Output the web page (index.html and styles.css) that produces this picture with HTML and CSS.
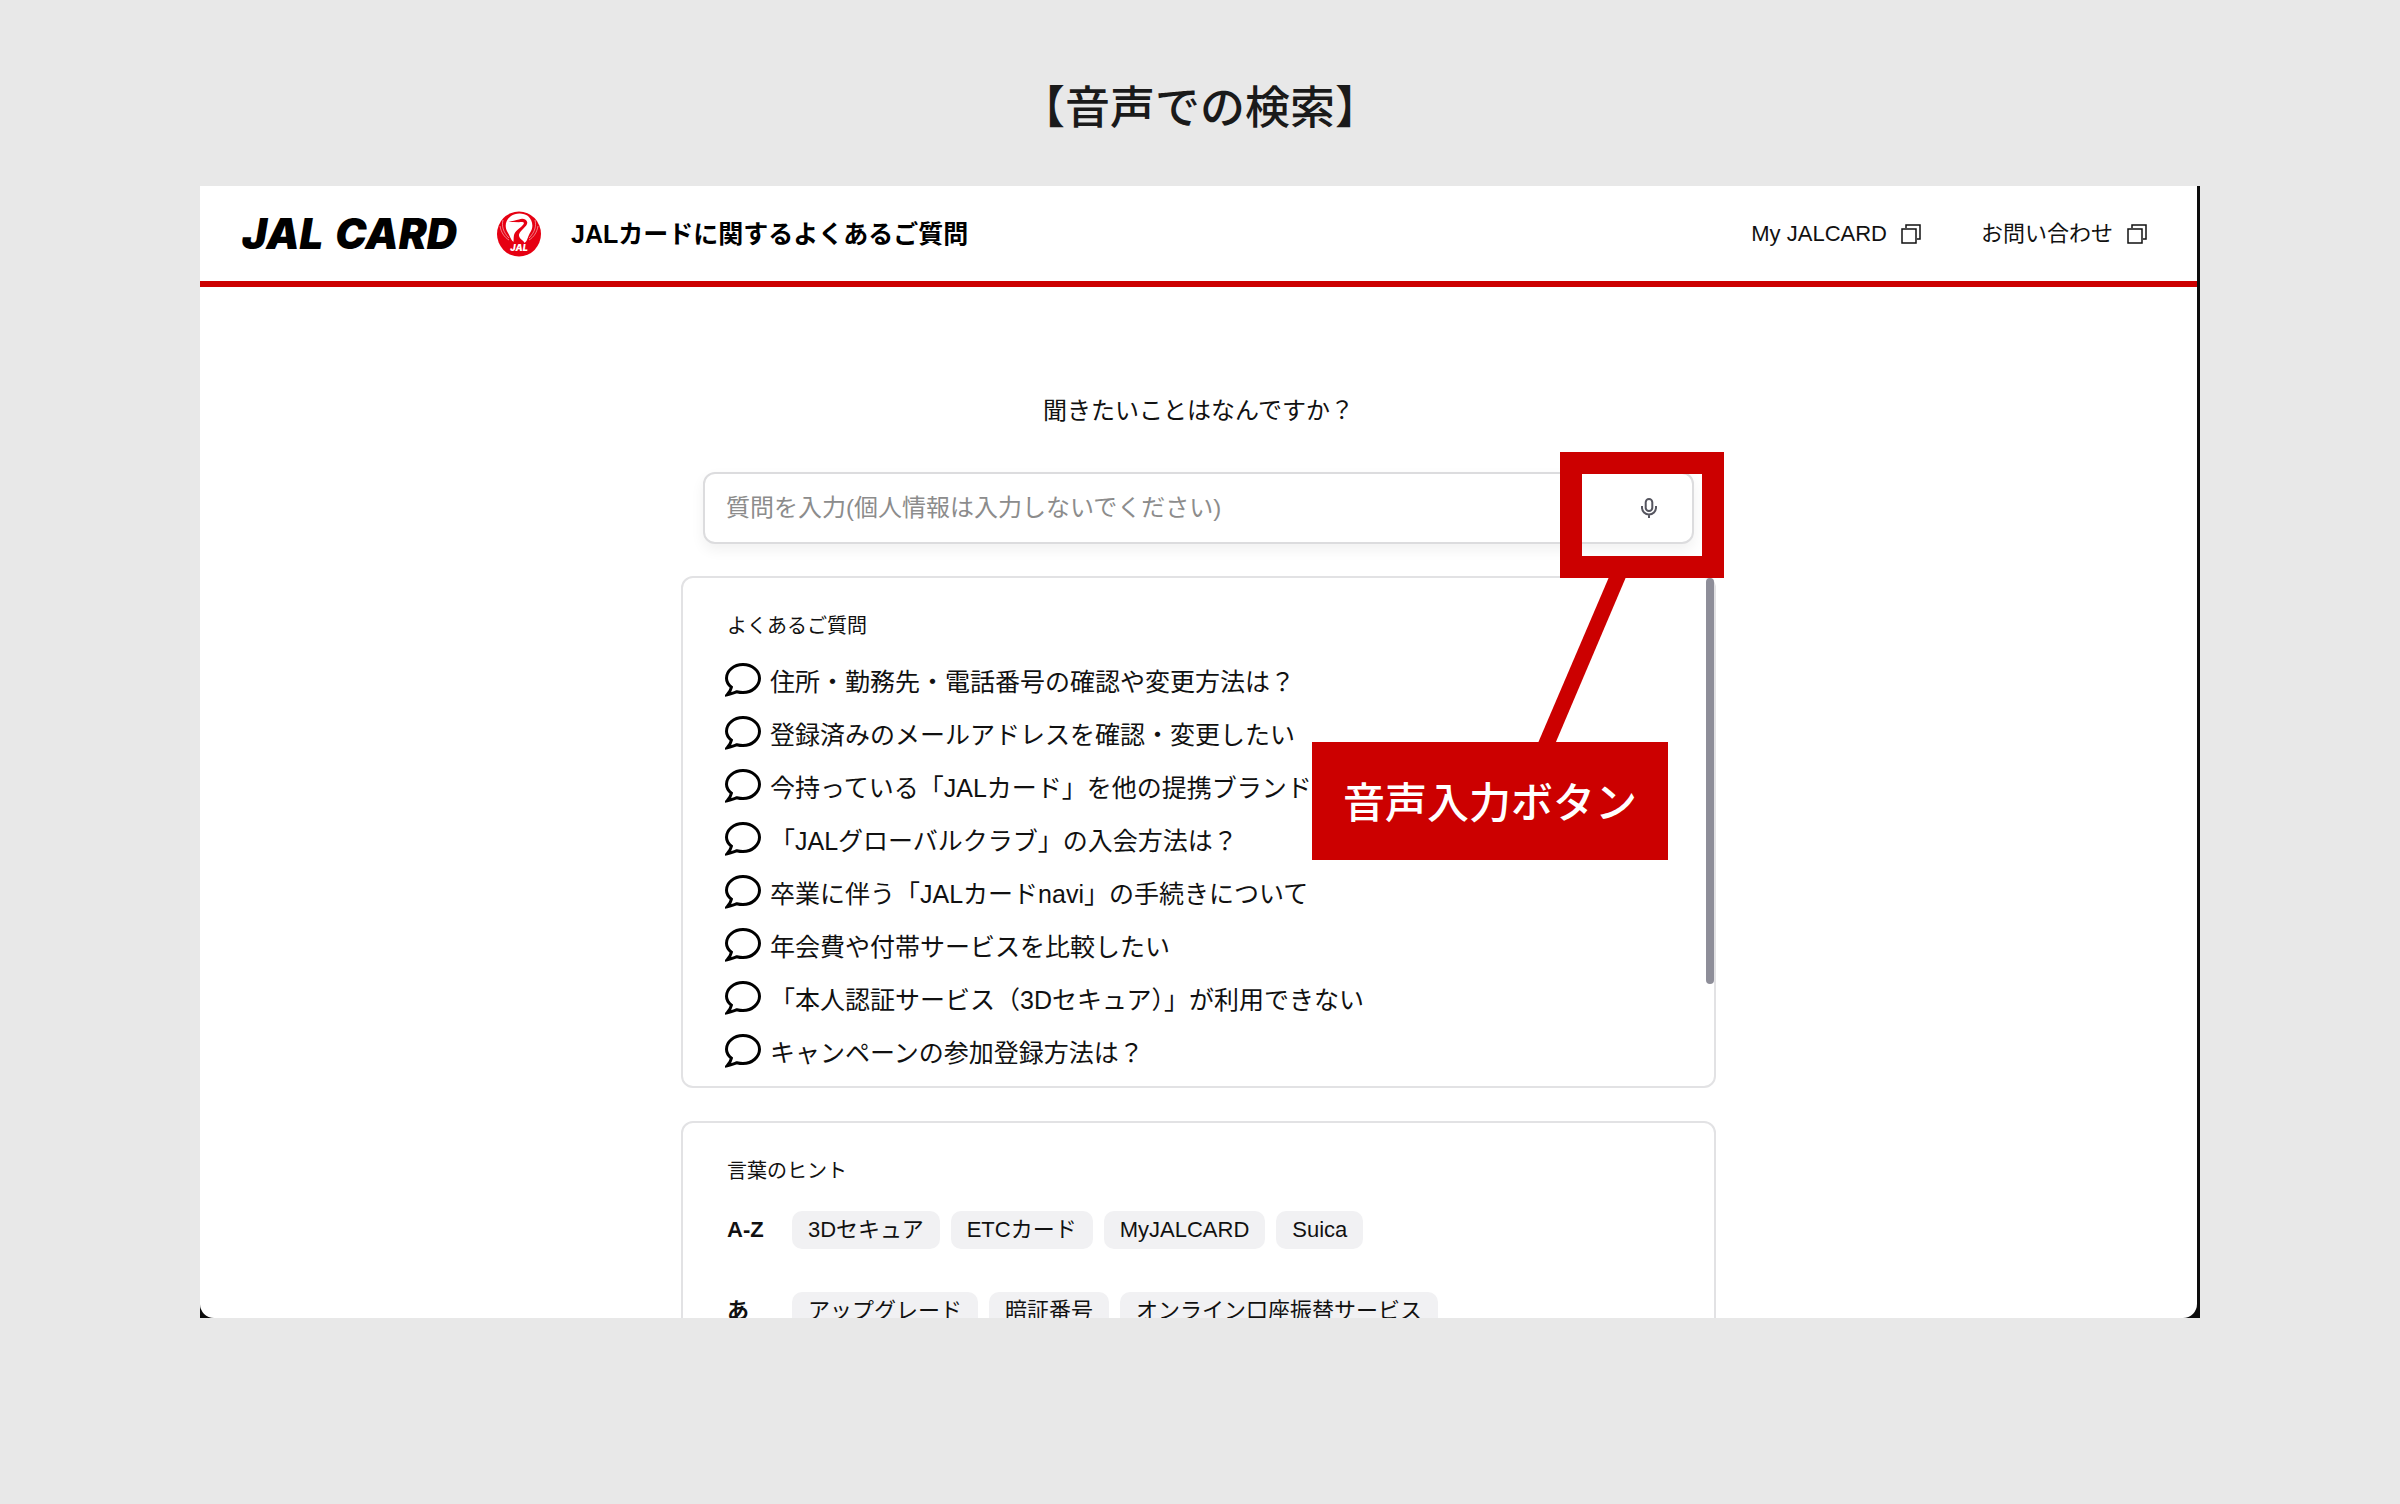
FILE: index.html
```html
<!DOCTYPE html>
<html lang="ja">
<head>
<meta charset="utf-8">
<meta name="viewport" content="width=device-width, initial-scale=1">
<title>音声での検索</title>
<link rel="stylesheet" href="styles.css">
</head>
<body>
<svg class="symbols" aria-hidden="true">
  <symbol id="bubble" viewBox="0 0 36 34"><path d="M6.400 24.200C3.300 21.800 1.500 18.800 1.500 15.300C1.500 7.700 8.800 1.600 18 1.600S34.500 7.700 34.500 15.300S27.200 29.500 18 29.500C15.900 29.500 13.800 29.200 11.800 28.700C9 29.700 5.800 31 2.200 31.800C4.300 29.400 5.900 27 6.400 24.200Z" fill="none" stroke="currentColor" stroke-width="3"/></symbol>
  <symbol id="window" viewBox="0 0 20 20"><path d="M1 5H15V19H1ZM5 4V1H19V15H16" fill="none" stroke="currentColor" stroke-width="1.500"/></symbol>
</svg>
<main class="slide">
  <h1 class="slide-title">【音声での検索】</h1>
  <div class="screen">
    <div class="page">
      <header class="header">
        <a class="logo" href="#" aria-label="JAL CARD">
          <span class="wordmark"><span>JAL</span><span>CARD</span></span>
          <svg class="emblem" viewBox="0 0 44 46">
            <ellipse cx="22" cy="23" rx="22" ry="22.500" fill="#e60012"/>
            <path d="M14 5C18 1.500 27 1.500 31 5C36 9.500 36.500 16 33.500 21C30.500 26 30.500 30 28 31.500C25 32.500 21 32.500 17.500 31.500C14 30 13.500 26 10.500 21C7.500 16 8 9.500 14 5Z" fill="#fff"/>
            <path d="M11.500 11C15 9.800 19 9.300 22 8.400C25 6.800 30 7.800 30.300 11.500C30.300 15.500 23.500 19 22 23.500C21.500 27 25 28.500 27 31V36H16V31.500C17 30.500 16.300 27.500 17 24C18.500 18.500 26.500 15.500 27 12C26.500 10.800 24 10.900 22 11.300C18.500 11.200 15 11 11.500 11Z" fill="#e60012"/>
            <path d="M6 9C4.500 15 6 21 12 27M38 9C39.500 15 38 21 32 27M3 15C4 21 7 26 12 29M41 15C40 21 37 26 32 29" fill="none" stroke="#fff" stroke-width=".500"/>
            <text x="22" y="40" text-anchor="middle" class="emblem-text">JAL</text>
          </svg>
        </a>
        <p class="site-name">JALカードに関するよくあるご質問</p>
        <nav class="nav">
          <a href="#">My JALCARD<svg class="window-icon"><use href="#window"/></svg></a>
          <a href="#">お問い合わせ<svg class="window-icon"><use href="#window"/></svg></a>
        </nav>
      </header>
      <div class="content">
        <label class="prompt" for="question">聞きたいことはなんですか？</label>
        <form class="search">
          <input id="question" type="text" placeholder="質問を入力(個人情報は入力しないでください)">
          <button class="mic" type="button" aria-label="音声入力">
            <svg viewBox="0 0 16 20"><rect x="4.700" y="1" width="6.600" height="12" rx="3.300"/><path d="M1 8V9.500A7 7 0 0 0 15 9.500V8M8 16.500V20"/></svg>
          </button>
          <div class="marker"></div>
          <svg class="leader" viewBox="0 0 88 166"><path d="M71 0H88L17.500 166H0Z" fill="#c00"/></svg>
          <div class="callout">音声入力ボタン</div>
        </form>
        <section class="panel">
          <h2>よくあるご質問</h2>
          <ul class="questions">
            <li><a href="#"><svg><use href="#bubble"/></svg>住所・勤務先・電話番号の確認や変更方法は？</a></li>
            <li><a href="#"><svg><use href="#bubble"/></svg>登録済みのメールアドレスを確認・変更したい</a></li>
            <li><a href="#"><svg><use href="#bubble"/></svg>今持っている「JALカード」を他の提携ブランドに</a></li>
            <li><a href="#"><svg><use href="#bubble"/></svg>「JALグローバルクラブ」の入会方法は？</a></li>
            <li><a href="#"><svg><use href="#bubble"/></svg>卒業に伴う「JALカードnavi」の手続きについて</a></li>
            <li><a href="#"><svg><use href="#bubble"/></svg>年会費や付帯サービスを比較したい</a></li>
            <li><a href="#"><svg><use href="#bubble"/></svg>「本人認証サービス（3Dセキュア）」が利用できない</a></li>
            <li><a href="#"><svg><use href="#bubble"/></svg>キャンペーンの参加登録方法は？</a></li>
          </ul>
          <div class="scroll-thumb"></div>
        </section>
        <section class="panel">
          <h2>言葉のヒント</h2>
          <div class="hints">
            <h3>A-Z</h3>
            <button type="button">3Dセキュア</button>
            <button type="button">ETCカード</button>
            <button type="button">MyJALCARD</button>
            <button type="button">Suica</button>
          </div>
          <div class="hints">
            <h3>あ</h3>
            <button type="button">アップグレード</button>
            <button type="button">暗証番号</button>
            <button type="button">オンライン口座振替サービス</button>
          </div>
        </section>
      </div>
    </div>
  </div>
</main>
</body>
</html>
```
FILE: styles.css
```css
* { box-sizing: border-box; }

body {
  margin: 0;
  background: #e8e8e8;
  color: #111;
  font-family: "Liberation Sans", "Noto Sans CJK JP", sans-serif;
  font-size: 24px;
  line-height: 36px;
}

h1, h2, h3, p, ul { margin: 0; padding: 0; }
a { color: inherit; text-decoration: none; }
button, input { font: inherit; color: inherit; }

.symbols { display: none; }

.slide { padding: 76px 200px 0; }

.slide-title {
  margin-bottom: 44px;
  font-size: 45px;
  line-height: 66px;
  font-weight: 500;
  text-align: center;
  color: #1a1a1a;
}

.screen {
  aspect-ratio: 2000 / 1132;
  display: flex;
  padding-right: 3px;
  background: #0c0c0c;
  overflow: hidden;
}

.page {
  flex: 1;
  background: #fff;
  border-radius: 0 0 14px 14px;
  overflow: hidden;
}

.header {
  display: flex;
  align-items: center;
  height: 101px;
  padding: 0 50px 0 42px;
  border-bottom: 6px solid #c00;
}

.logo {
  display: flex;
  align-items: center;
}

.wordmark {
  display: flex;
  gap: 12px;
  width: 255px;
  font-family: Inter, sans-serif;
  font-size: 42px;
  font-weight: 900;
  font-style: italic;
  color: #000;
}

.emblem { width: 44px; height: 46px; }

.emblem-text {
  font: italic 900 9px Inter, sans-serif;
  fill: #fff;
}

.site-name {
  margin-left: 30px;
  font-size: 25px;
  font-weight: 700;
  color: #000;
}

.nav {
  display: flex;
  gap: 60px;
  margin-left: auto;
  font-size: 22px;
}

.nav a {
  display: flex;
  align-items: center;
  gap: 14px;
}

.window-icon { width: 20px; height: 20px; }

.content {
  width: 1035px;
  max-width: 100%;
  margin: 0 auto;
  padding-top: 106px;
}

.prompt {
  display: block;
  text-align: center;
}

.search {
  position: relative;
  z-index: 1;
  display: flex;
  margin: 43px 22px 32px;
  border: 2px solid #dcdcde;
  border-radius: 12px;
  background: #fff;
  box-shadow: 0 6px 14px rgba(0, 0, 0, .06);
}

.search input {
  flex: 1;
  min-width: 0;
  height: 68px;
  padding: 0 21px;
  border: 0;
  background: none;
  outline: 0;
}

.search input::placeholder { color: #8c8c8c; opacity: 1; }

.mic {
  display: grid;
  place-items: center;
  width: 86px;
  padding: 0;
  border: 0;
  background: none;
  color: #55555f;
}

.mic svg {
  width: 16px;
  height: 20px;
  fill: none;
  stroke: currentColor;
  stroke-width: 2;
}

.marker {
  position: absolute;
  top: -22px;
  right: -32px;
  width: 164px;
  height: 126px;
  border: 22px solid #c00;
}

.leader {
  position: absolute;
  top: 103px;
  right: 66px;
  width: 88px;
  height: 166px;
}

.callout {
  position: absolute;
  top: 268px;
  right: 24px;
  width: 356px;
  padding-top: 6px;
  background: #c00;
  color: #fff;
  font-size: 42px;
  line-height: 112px;
  font-weight: 500;
  text-align: center;
}

.panel {
  position: relative;
  margin-bottom: 33px;
  padding: 32px 44px 7px;
  border: 2px solid #e2e2e4;
  border-radius: 12px;
}

.panel h2 {
  font-size: 20px;
  line-height: 32px;
  font-weight: 400;
}

.questions {
  padding-top: 13px;
  font-size: 25px;
  list-style: none;
}

.questions a {
  display: flex;
  align-items: center;
  gap: 9px;
  height: 53px;
}

.questions svg {
  width: 36px;
  height: 34px;
  margin: 0 0 4px -2px;
  color: #000;
}

.scroll-thumb {
  position: absolute;
  top: 0;
  right: 0;
  width: 8px;
  height: 406px;
  border-radius: 4px;
  background: #8e8e99;
}

.hints {
  display: flex;
  gap: 11px;
  margin: 24px 0 43px;
  font-size: 22px;
  line-height: 38px;
}

.hints h3 {
  width: 54px;
  font-size: inherit;
  font-weight: 700;
}

.hints button {
  padding: 0 16px;
  border: 0;
  border-radius: 10px;
  background: #f1f1f3;
}
```
